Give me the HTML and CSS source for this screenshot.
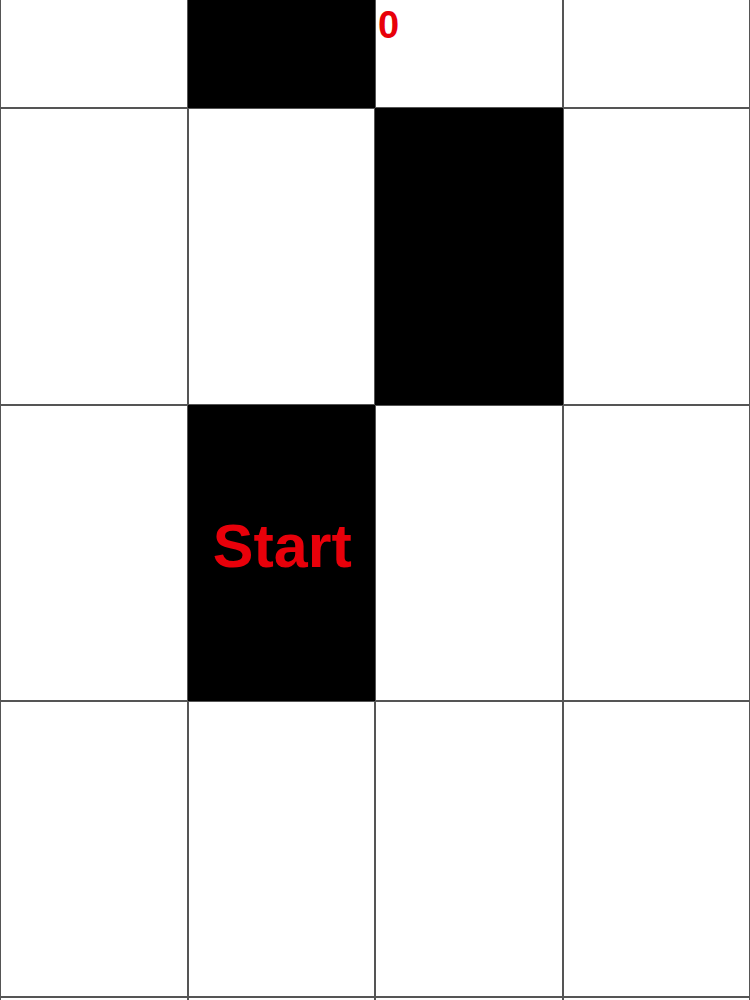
FILE: index.html
```html
<!DOCTYPE html>
<html>
<head>
<meta charset="utf-8">
<link rel="stylesheet" href="styles.css">
</head>
<body>
<div class="game">
  <div class="board">
    <div class="row first">
      <div class="cell"></div><div class="cell black"></div><div class="cell"></div><div class="cell"></div>
    </div>
    <div class="row">
      <div class="cell"></div><div class="cell"></div><div class="cell black"></div><div class="cell"></div>
    </div>
    <div class="row">
      <div class="cell"></div><div class="cell black start"><span>Start</span></div><div class="cell"></div><div class="cell"></div>
    </div>
    <div class="row">
      <div class="cell"></div><div class="cell"></div><div class="cell"></div><div class="cell"></div>
    </div>
    <div class="row">
      <div class="cell"></div><div class="cell"></div><div class="cell"></div><div class="cell"></div>
    </div>
  </div>
  <div class="score">0</div>
</div>
</body>
</html>
```
FILE: styles.css
```css
html, body {
  margin: 0;
  padding: 0;
  background: #fff;
}
.game {
  position: relative;
  width: 750px;
  height: 1000px;
  overflow: hidden;
  font-family: "Liberation Sans", Arial, sans-serif;
}
.board {
  display: flex;
  flex-direction: column;
}
.row {
  display: grid;
  grid-template-columns: repeat(4, 1fr);
  height: 296.33px;
  flex: none;
}
.row.first {
  margin-top: -188px;
}
.cell {
  border: 1px solid #555;
  background: #fff;
  box-sizing: border-box;
}
.cell.black {
  background: #000;
  border-color: #000;
}
.start {
  display: flex;
  align-items: center;
  justify-content: center;
}
.start span {
  color: #e8000a;
  font-weight: bold;
  font-size: 61px;
  line-height: 1;
  margin-top: -12px;
  margin-left: 2px;
}
.score {
  position: absolute;
  top: 6px;
  left: 378px;
  color: #e8000a;
  font-weight: bold;
  font-size: 38px;
  line-height: 1;
}
```
